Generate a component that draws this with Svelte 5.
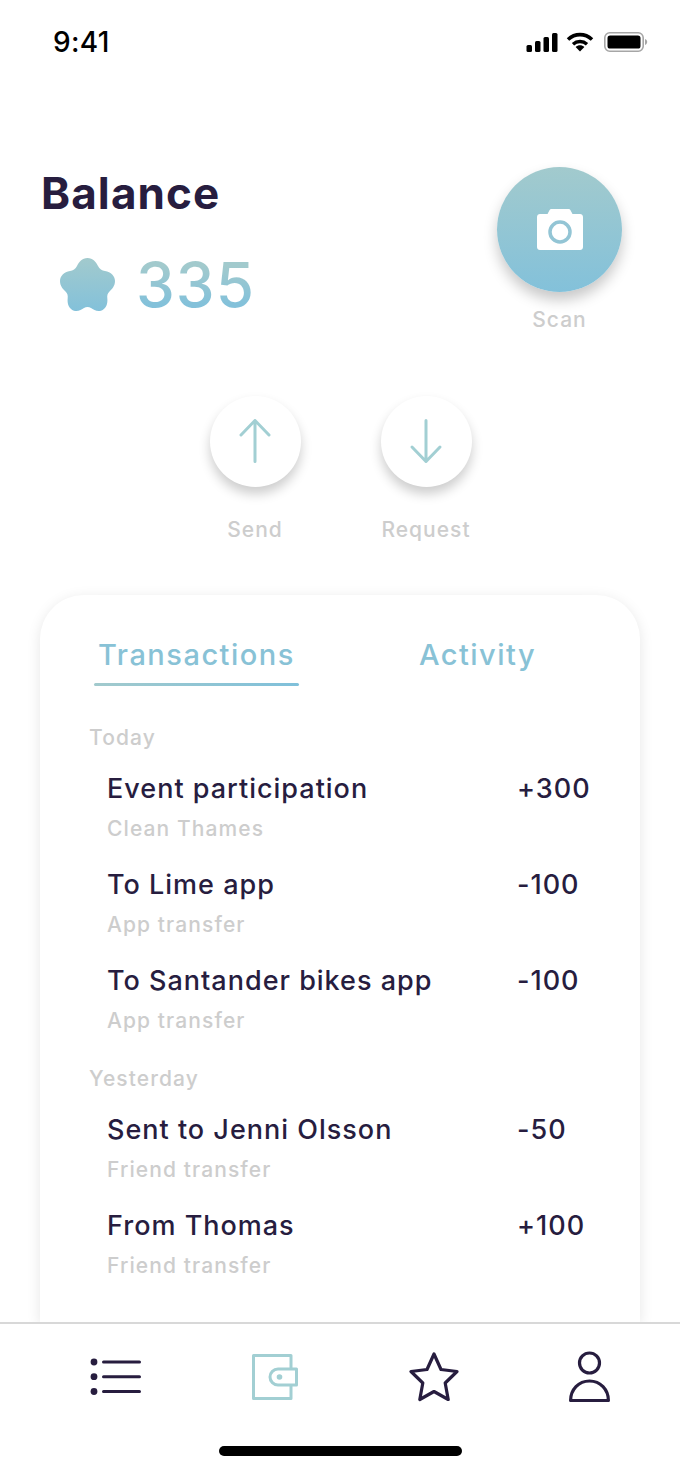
<script>
	const groups = [
		{
			label: 'Today',
			items: [
				{ title: 'Event participation', sub: 'Clean Thames', amount: '+300' },
				{ title: 'To Lime app', sub: 'App transfer', amount: '-100' },
				{ title: 'To Santander bikes app', sub: 'App transfer', amount: '-100' }
			]
		},
		{
			label: 'Yesterday',
			items: [
				{ title: 'Sent to Jenni Olsson', sub: 'Friend transfer', amount: '-50' },
				{ title: 'From Thomas', sub: 'Friend transfer', amount: '+100' }
			]
		}
	];
</script>

<div class="screen">
	<header class="status">
		<span class="time">9:41</span>
		<div class="status-icons">
			<svg width="32" height="19" viewBox="0 0 32 19" fill="#000">
				<rect x="0.500" y="12" width="5.500" height="7" rx="1.500" />
				<rect x="9" y="8" width="5.500" height="11" rx="1.500" />
				<rect x="17.500" y="4" width="5.500" height="15" rx="1.500" />
				<rect x="26" y="0" width="5.500" height="19" rx="1.500" />
			</svg>
			<svg width="28" height="20" viewBox="0 0 28 20">
				<path d="M2 7.500C9 1 19 1 26 7.500" fill="none" stroke="#000" stroke-width="3.600" />
				<path d="M7 12.200C11 8.600 17 8.600 21 12.200" fill="none" stroke="#000" stroke-width="3.400" />
				<path d="M9.600 15 L14 19.600 L18.400 15 C16 12.800 12 12.800 9.600 15Z" fill="#000" />
			</svg>
			<svg class="battery" width="44" height="20" viewBox="0 0 44 20">
				<rect x="0.800" y="0.800" width="38.400" height="18.400" rx="5" fill="none" stroke="#a6a6a6" stroke-width="1.600" />
				<rect x="3.500" y="3.500" width="33" height="13" rx="2.600" fill="#000" />
				<path d="M41 7v6c1.300-.4 2.200-1.600 2.200-3s-.9-2.600-2.200-3z" fill="#a6a6a6" />
			</svg>
		</div>
	</header>

	<section class="summary">
		<div class="balance">
			<h1>Balance</h1>
			<div class="points">
				<svg width="55" height="54" viewBox="0 0 55 54">
					<defs>
						<linearGradient id="starFill" x1="0" y1="0" x2="0" y2="1">
							<stop offset="0" stop-color="#a2cacd" />
							<stop offset="1" stop-color="#83c1da" />
						</linearGradient>
					</defs>
					<path
						fill="url(#starFill)"
						d="M27.500 0C33 0 36 4 38 8 39.500 11 42 12.500 45 13 51 14 55 18 55 23 55 28 52 31 49.500 33.500 47.500 35.500 47 37.500 47.300 40 48 46 46 51 41 52.700 37 54 33.500 51.500 31 50 29 48.800 26 48.800 24 50 21.500 51.500 18 54 14 52.700 9 51 7 46 7.700 40 8 37.500 7.500 35.500 5.500 33.500 3 31 0 28 0 23 0 18 4 14 10 13 13 12.500 15.500 11 17 8 19 4 22 0 27.500 0Z"
					/>
				</svg>
				<span class="amount">335</span>
			</div>
		</div>
		<div class="scan">
			<div class="scan-button">
				<svg width="46" height="41" viewBox="0 0 46 41">
					<path
						fill="#fff"
						d="M3 5h7.500l2-3.800c.4-.8 1-1.200 1.800-1.200h17.400c.8 0 1.400.4 1.800 1.200l2 3.800H43c1.700 0 3 1.300 3 3v30c0 1.700-1.300 3-3 3H3c-1.700 0-3-1.300-3-3V8c0-1.700 1.300-3 3-3z"
					/>
					<circle cx="23" cy="23" r="10" fill="none" stroke="#93c5d5" stroke-width="3.500" />
				</svg>
			</div>
			<span class="action-label">Scan</span>
		</div>
	</section>

	<section class="actions">
		<div class="action">
			<div class="round">
				<svg width="36" height="46" viewBox="0 0 36 46" fill="none" stroke="#a2cfd3" stroke-width="3" stroke-linecap="round" stroke-linejoin="round">
					<path d="M18 42.500V1.500M4 16 18 1.500 32 16" />
				</svg>
			</div>
			<span class="action-label">Send</span>
		</div>
		<div class="action">
			<div class="round">
				<svg width="36" height="46" viewBox="0 0 36 46" fill="none" stroke="#a2cfd3" stroke-width="3" stroke-linecap="round" stroke-linejoin="round">
					<path d="M18 1.500v41M4 28 18 42.500 32 28" />
				</svg>
			</div>
			<span class="action-label">Request</span>
		</div>
	</section>

	<section class="card">
		<nav class="tabs">
			<button class="tab active">Transactions</button>
			<button class="tab">Activity</button>
		</nav>
		{#each groups as group}
			<div class="group">
				<h2>{group.label}</h2>
				{#each group.items as item}
					<div class="row">
						<div>
							<div class="title">{item.title}</div>
							<div class="sub">{item.sub}</div>
						</div>
						<div class="value">{item.amount}</div>
					</div>
				{/each}
			</div>
		{/each}
	</section>

	<footer class="tabbar">
		<div class="icons">
			<svg width="52" height="38" viewBox="0 0 52 38" fill="none" stroke="#271d3f" stroke-width="3" stroke-linecap="round">
				<circle cx="4" cy="4" r="3.400" fill="#271d3f" stroke="none" />
				<circle cx="4" cy="18.700" r="3.400" fill="#271d3f" stroke="none" />
				<circle cx="4" cy="33.500" r="3.400" fill="#271d3f" stroke="none" />
				<path d="M13.500 4h36M13.500 18.700h36M13.500 33.500h36" />
			</svg>
			<svg width="46" height="46" viewBox="0 0 46 46" fill="none" stroke="#a2cfd3" stroke-width="3">
				<path d="M39 15V1.500H1.500v43H39V31" stroke-linejoin="round" />
				<path d="M44.500 15H26a7.800 7.800 0 0 0 0 16h18.500z" fill="#fff" stroke-linejoin="round" />
				<circle cx="27.500" cy="23" r="2.800" fill="#a2cfd3" stroke="none" />
			</svg>
			<svg width="50" height="50" viewBox="0 0 50 50" fill="none" stroke="#271d3f" stroke-width="3.200" stroke-linejoin="round">
				<path d="M25 2l7 15.500 16 2-11.800 11.500 3 16.500L25 39.500 10.800 47.500l3-16.500L2 19.500l16-2z" />
			</svg>
			<svg width="41" height="52" viewBox="0 0 41 52" fill="none" stroke="#271d3f" stroke-width="3.200" stroke-linejoin="round">
				<circle cx="20.500" cy="12" r="10" />
				<path d="M1.600 49.500c0-11 8-19.500 18.900-19.500s18.900 8.500 18.900 19.500z" />
			</svg>
		</div>
		<div class="home-indicator"></div>
	</footer>
</div>

<style>
	:global(body) {
		margin: 0;
		background: #fff;
	}

	.screen {
		width: 680px;
		height: 1472px;
		display: flex;
		flex-direction: column;
		overflow: hidden;
		background: #fff;
		font-family: 'Inter', sans-serif;
		color: #271d3f;
	}

	.status {
		height: 84px;
		flex: none;
		display: flex;
		justify-content: space-between;
		align-items: center;
		padding: 0 32px 0 53px;
		box-sizing: border-box;
	}

	.time {
		font-size: 28px;
		font-weight: 500;
		letter-spacing: 0.3px;
		color: #000;
	}

	.status-icons {
		display: flex;
		align-items: center;
		gap: 8px;
	}

	.battery {
		margin-left: 2px;
	}

	.summary {
		flex: none;
		height: 252px;
		display: flex;
		justify-content: space-between;
		padding: 82px 58px 0 41px;
		box-sizing: border-box;
	}

	h1 {
		margin: 0;
		font-size: 44px;
		line-height: 54px;
		font-weight: 700;
		letter-spacing: 1.1px;
		color: #271d3f;
	}

	.points {
		display: flex;
		align-items: center;
		gap: 21px;
		margin: 33px 0 0 19px;
	}

	.amount {
		font-weight: 500;
		font-size: 62px;
		line-height: 64px;
		letter-spacing: 1px;
		background: linear-gradient(#a2cacd 20%, #83c1da 80%);
		-webkit-background-clip: text;
		background-clip: text;
		color: transparent;
	}

	.scan {
		display: flex;
		flex-direction: column;
		align-items: center;
		gap: 15px;
		padding-top: 1px;
	}

	.scan-button {
		width: 125px;
		height: 125px;
		border-radius: 50%;
		background: linear-gradient(#a2cacd, #83c1da);
		box-shadow: 0 8px 14px rgba(0, 0, 0, 0.22);
		display: flex;
		align-items: center;
		justify-content: center;
	}

	.action-label {
		font-size: 21px;
		line-height: 26px;
		letter-spacing: 1px;
		color: #cdcdcd;
		font-weight: 500;
		white-space: nowrap;
	}

	.actions {
		flex: none;
		height: 259px;
		display: flex;
		justify-content: center;
		gap: 80px;
		padding-top: 60px;
		box-sizing: border-box;
		margin-left: 1px;
	}

	.action {
		display: flex;
		flex-direction: column;
		align-items: center;
		gap: 30px;
		width: 91px;
	}

	.round {
		width: 91px;
		height: 91px;
		border-radius: 50%;
		background: #fff;
		box-shadow: 0 7px 12px rgba(0, 0, 0, 0.2);
		display: flex;
		align-items: center;
		justify-content: center;
		flex: none;
	}

	.card {
		flex: 1;
		min-height: 0;
		margin: 0 40px;
		border-radius: 44px 44px 0 0;
		background: #fff;
		box-shadow: 0 3px 14px rgba(0, 0, 0, 0.1);
		padding: 41px 49px 0;
		box-sizing: border-box;
	}

	.tabs {
		display: flex;
		align-items: flex-start;
		gap: 116px;
		padding-left: 5px;
		margin-bottom: 39px;
	}

	.tab {
		border: 0;
		background: none;
		padding: 0 4px;
		font-family: inherit;
		font-size: 29px;
		line-height: 38px;
		font-weight: 500;
		letter-spacing: 1.5px;
		color: #88c2d6;
	}

	.tab.active::after {
		content: '';
		display: block;
		height: 3px;
		margin: 9px -4px 0;
		border-radius: 2px;
		background: linear-gradient(90deg, #a2cacd, #7fc0da);
	}

	.group + .group {
		margin-top: 7px;
	}

	h2 {
		margin: 0 0 20px;
		font-size: 21px;
		line-height: 26px;
		font-weight: 500;
		letter-spacing: 1.1px;
		color: #cdcdcd;
	}

	.row {
		display: flex;
		justify-content: space-between;
		height: 96px;
		padding-left: 18px;
	}

	.value {
		width: 74px;
		font-size: 27px;
		line-height: 36px;
		font-weight: 500;
		letter-spacing: 1px;
	}

	.title {
		font-size: 27px;
		line-height: 36px;
		font-weight: 500;
		letter-spacing: 1px;
		color: #271d3f;
	}

	.sub {
		margin-top: 9px;
		font-size: 21px;
		line-height: 26px;
		font-weight: 500;
		letter-spacing: 1.1px;
		color: #cdcdcd;
	}

	.tabbar {
		flex: none;
		height: 150px;
		border-top: 2px solid #d8d8d8;
		background: #fff;
		box-sizing: border-box;
	}

	.icons {
		display: flex;
		align-items: center;
		gap: 110.300px;
		padding: 27px 0 0 90px;
	}

	.home-indicator {
		width: 243px;
		height: 10px;
		border-radius: 5px;
		background: #000;
		margin: 43px auto 0;
	}
</style>
